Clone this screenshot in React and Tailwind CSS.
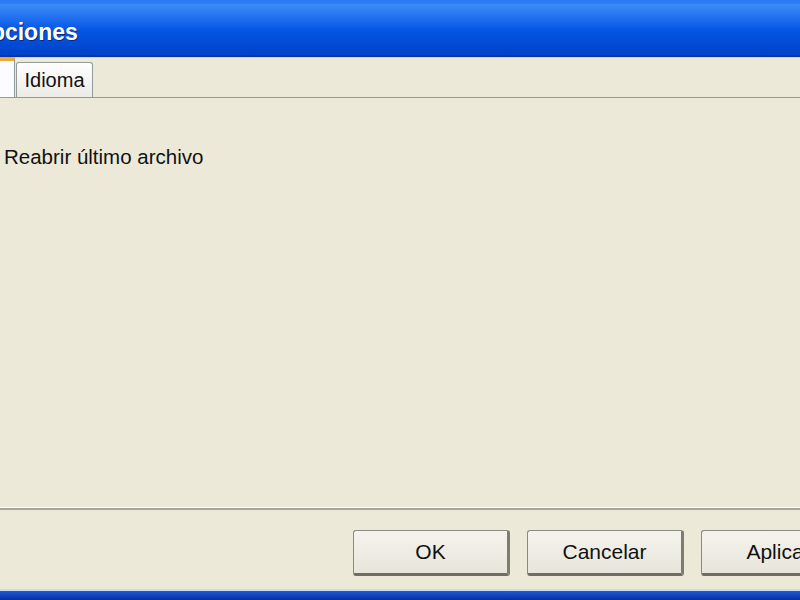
import React from 'react';

// Диалог "Opciones" в стиле Windows XP (увеличенный фрагмент)
const font = { fontFamily: '"Liberation Sans", Arial, sans-serif' };

const XpButton = ({ children }) => (
    <button
        className="h-[46px] w-[157px] shrink-0 rounded-[3px] border border-[#8a8a80] border-b-[3px] border-r-[3px] border-b-[#6f6e66] border-r-[#7d7c72] bg-gradient-to-b from-[#f4f3ee] to-[#e8e6da] text-[21px] text-[#111]"
        style={font}
    >
        {children}
    </button>
);

const App = () => {
    return (
        <div className="flex h-[600px] w-[800px] flex-col overflow-hidden bg-[#ece9d8]" style={font}>
            {/* Заголовок окна */}
            <div className="flex h-[57px] shrink-0 items-center bg-gradient-to-b from-[#3d8cf7] via-[#0656e6] to-[#0042c8] border-t-4 border-t-[#2a7bf4] border-b-2 border-b-[#0037a8]">
                <span className="-ml-[27px] mt-[6px] text-[23px] font-bold text-white [text-shadow:1px_1px_0_#0a2a80]">
                    Opciones
                </span>
            </div>
            <div className="h-px shrink-0 bg-[#c8d6f0]" />

            {/* Вкладки */}
            <div className="flex h-[40px] shrink-0 items-end border-b border-b-[#919b9c]">
                <div className="h-[40px] w-[15px] border-t-[4px] border-t-[#f4a63a] border-r border-r-[#919b9c] bg-[#fcfcfe]" />
                <div className="ml-px flex h-[35px] w-[77px] items-center justify-center rounded-t-[3px] border border-b-0 border-[#919b9c] bg-gradient-to-b from-[#ffffff] to-[#ecebe5] text-[20px] text-[#111]">
                    Idioma
                </div>
            </div>

            {/* Содержимое вкладки */}
            <div className="flex flex-1 flex-col pt-[47px]">
                <div className="pl-[4px] text-[20.5px] leading-[24px] text-[#111]">Reabrir último archivo</div>
            </div>

            {/* Разделитель */}
            <div className="h-px shrink-0 bg-[#ffffff]" />
            <div className="h-[2px] shrink-0 bg-[#a8a69a]" />

            {/* Кнопки */}
            <div className="flex h-[79px] shrink-0 items-start gap-[17px] pl-[353px] pt-[20px]">
                <XpButton>OK</XpButton>
                <XpButton>Cancelar</XpButton>
                <XpButton>Aplicar</XpButton>
            </div>

            {/* Нижняя рамка окна */}
            <div className="h-[2px] shrink-0 bg-[#c8dcf8]" />
            <div className="h-[9px] shrink-0 bg-gradient-to-b from-[#1f5ad8] to-[#0a2f9e]" />
        </div>
    );
};

export default App;
